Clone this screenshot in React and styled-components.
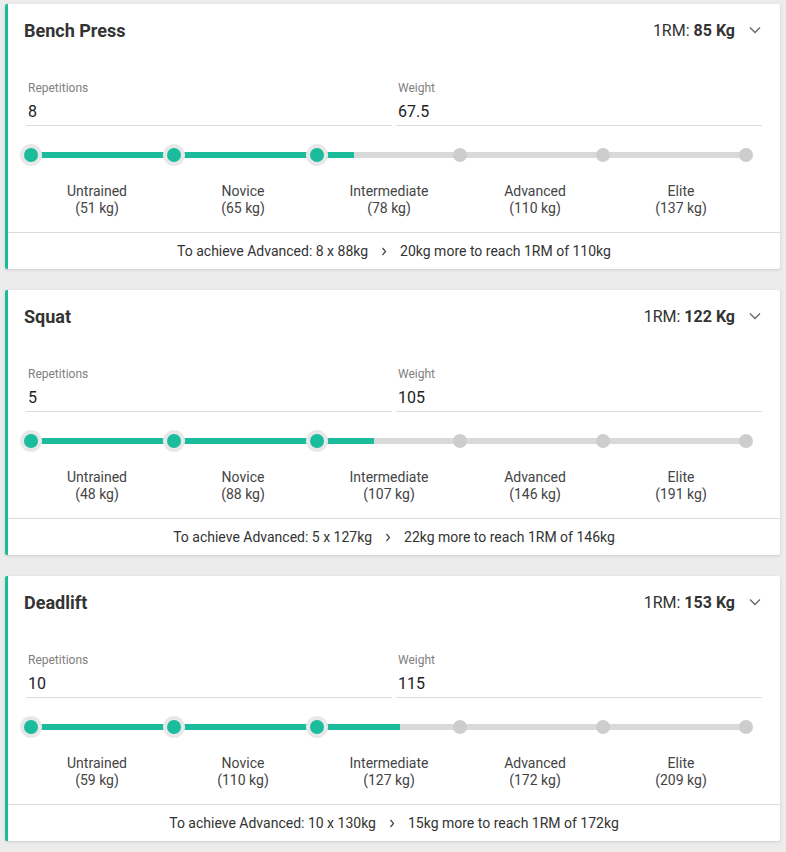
import React from "react";
import styled, { createGlobalStyle } from "styled-components";

const GlobalStyle = createGlobalStyle`
  body {
    margin: 0;
    background: #ececec;
    font-family: Roboto, "Liberation Sans", Arial, sans-serif;
    color: #333;
  }
`;

const StyledPage = styled.div`
  display: flex;
  flex-direction: column;
  gap: 21px;
  padding: 4px 6px 20px 5px;
`;

const StyledCard = styled.div`
  background: #fff;
  border-left: 3px solid #1abc9c;
  border-radius: 2px;
  box-shadow: 0 1px 3px rgba(0, 0, 0, 0.14);
  height: 265px;
  display: flex;
  flex-direction: column;
`;

const StyledHeader = styled.div`
  display: flex;
  align-items: center;
  justify-content: space-between;
  height: 24px;
  padding: 14px 19px 0 16px;
`;

const StyledTitle = styled.h2`
  margin: 0;
  font-size: 18px;
  font-weight: 700;
  color: #333;
`;

const StyledOneRm = styled.div`
  display: flex;
  align-items: center;
  gap: 14px;
  font-size: 16px;
  color: #333;

  b {
    font-weight: 700;
  }
`;

const StyledFields = styled.div`
  display: grid;
  grid-template-columns: 1fr 1fr;
  gap: 4px;
  margin: 39px 18px 0 18px;
`;

const StyledField = styled.div`
  border-bottom: 1px solid #dcdcdc;
  padding: 0 2px 3px;
`;

const StyledLabel = styled.div`
  font-size: 12px;
  line-height: 14px;
  color: #808080;
`;

const StyledValue = styled.div`
  margin-top: 7px;
  font-size: 16px;
  line-height: 20px;
  color: #222;
`;

const StyledSlider = styled.div`
  position: relative;
  height: 22px;
  margin: 18px 34px 0 23px;
`;

const StyledTrack = styled.div`
  position: absolute;
  left: 0;
  right: 0;
  top: 8px;
  height: 6px;
  background: #d9d9d9;
`;

const StyledFill = styled.div`
  height: 100%;
  background: #1abc9c;
`;

const StyledDot = styled.span`
  position: absolute;
  top: 11px;
  width: 14px;
  height: 14px;
  margin: -7px 0 0 -7px;
  border-radius: 50%;
  background: ${({ $active }) => ($active ? "#1abc9c" : "#cdcdcd")};
  box-shadow: ${({ $active }) => ($active ? "0 0 0 4px #e8e8e8" : "none")};
`;

const StyledLevels = styled.div`
  display: grid;
  grid-template-columns: repeat(5, 1fr);
  margin: 17px 18px 0 16px;
  width: 730px;
`;

const StyledLevel = styled.div`
  text-align: center;
  font-size: 14px;
  line-height: 17px;
  color: #444;
`;

const StyledFooter = styled.div`
  margin-top: auto;
  border-top: 1px solid #dcdcdc;
  height: 36px;
  display: flex;
  align-items: center;
  justify-content: center;
  gap: 13px;
  font-size: 14px;
  color: #333;
`;

const Chevron = () => (
  <svg width="12" height="8" viewBox="0 0 12 8" fill="none">
    <polyline points="1,1.5 6,6.5 11,1.5" stroke="#666" strokeWidth="1.3" />
  </svg>
);

const Arrow = () => (
  <svg width="6" height="9" viewBox="0 0 6 9" fill="none">
    <polyline points="1.5,1 4.5,4.5 1.5,8" stroke="#444" strokeWidth="1.2" />
  </svg>
);

const lifts = [
  {
    name: "Bench Press",
    oneRm: 85,
    reps: "8",
    weight: "67.5",
    fill: 45.2,
    levels: [51, 65, 78, 110, 137],
    target: "8 x 88kg",
    more: "20kg more to reach 1RM of 110kg",
  },
  {
    name: "Squat",
    oneRm: 122,
    reps: "5",
    weight: "105",
    fill: 48.0,
    levels: [48, 88, 107, 146, 191],
    target: "5 x 127kg",
    more: "22kg more to reach 1RM of 146kg",
  },
  {
    name: "Deadlift",
    oneRm: 153,
    reps: "10",
    weight: "115",
    fill: 51.6,
    levels: [59, 110, 127, 172, 209],
    target: "10 x 130kg",
    more: "15kg more to reach 1RM of 172kg",
  },
];

const levelNames = ["Untrained", "Novice", "Intermediate", "Advanced", "Elite"];
const stops = [0, 20, 40, 60, 80, 100];

const LiftCard = ({ lift }) => (
  <StyledCard>
    <StyledHeader>
      <StyledTitle>{lift.name}</StyledTitle>
      <StyledOneRm>
        <span>
          1RM: <b>{lift.oneRm} Kg</b>
        </span>
        <Chevron />
      </StyledOneRm>
    </StyledHeader>
    <StyledFields>
      <StyledField>
        <StyledLabel>Repetitions</StyledLabel>
        <StyledValue>{lift.reps}</StyledValue>
      </StyledField>
      <StyledField>
        <StyledLabel>Weight</StyledLabel>
        <StyledValue>{lift.weight}</StyledValue>
      </StyledField>
    </StyledFields>
    <StyledSlider>
      <StyledTrack>
        <StyledFill style={{ width: `${lift.fill}%` }} />
      </StyledTrack>
      {stops.map((s) => (
        <StyledDot key={s} $active={s <= lift.fill} style={{ left: `${s}%` }} />
      ))}
    </StyledSlider>
    <StyledLevels>
      {levelNames.map((n, i) => (
        <StyledLevel key={n}>
          {n}
          <br />({lift.levels[i]} kg)
        </StyledLevel>
      ))}
    </StyledLevels>
    <StyledFooter>
      <span>To achieve Advanced: {lift.target}</span>
      <Arrow />
      <span>{lift.more}</span>
    </StyledFooter>
  </StyledCard>
);

const App = () => (
  <>
    <GlobalStyle />
    <StyledPage>
      {lifts.map((l) => (
        <LiftCard key={l.name} lift={l} />
      ))}
    </StyledPage>
  </>
);

export default App;
